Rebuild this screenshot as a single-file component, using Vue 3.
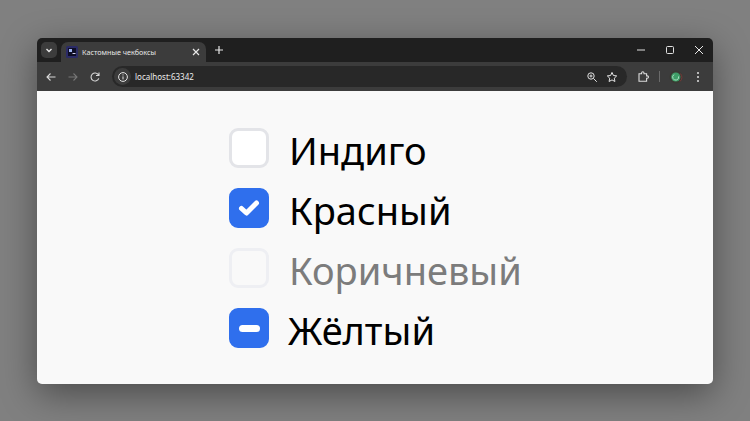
<script setup>
const items = [
  { label: 'Индиго', state: 'empty' },
  { label: 'Красный', state: 'checked' },
  { label: 'Коричневый', state: 'disabled' },
  { label: 'Жёлтый', state: 'mixed' },
]
</script>

<template>
  <div class="stage">
    <div class="window">
      <div class="tabbar">
        <div class="tabmenu">
          <svg width="10" height="10" viewBox="0 0 10 10"><path d="M2.5 4l2.5 2.5L7.5 4" fill="none" stroke="#e8e8e8" stroke-width="1.4"/></svg>
        </div>
        <div class="tab">
          <svg class="favicon" width="12" height="12" viewBox="0 0 12 12">
            <rect width="12" height="12" rx="1.5" fill="#2b2b66"/>
            <rect x="2" y="2" width="8" height="8" fill="#0e0e26"/>
            <rect x="3" y="3" width="3" height="3" fill="#9fb4f0"/>
            <rect x="6.5" y="7" width="3" height="1" fill="#d0d0f0"/>
          </svg>
          <span class="tabtitle">Кастомные чекбоксы</span>
          <svg width="10" height="10" viewBox="0 0 10 10"><path d="M2 2l6 6M8 2l-6 6" stroke="#e8e8e8" stroke-width="1.2"/></svg>
        </div>
        <svg class="newtab" width="10" height="10" viewBox="0 0 10 10"><path d="M5 1v8M1 5h8" stroke="#e8e8e8" stroke-width="1.2"/></svg>
        <div class="spacer"></div>
        <div class="winctl">
          <svg width="10" height="10" viewBox="0 0 10 10"><path d="M1 5h8" stroke="#e0e0e0" stroke-width="1"/></svg>
          <svg width="10" height="10" viewBox="0 0 10 10"><rect x="1.5" y="1.5" width="7" height="7" rx="1" fill="none" stroke="#e0e0e0" stroke-width="1"/></svg>
          <svg width="10" height="10" viewBox="0 0 10 10"><path d="M1 1l8 8M9 1l-8 8" stroke="#e8e8e8" stroke-width="1"/></svg>
        </div>
      </div>
      <div class="toolbar">
        <svg class="tool" width="12" height="12" viewBox="0 0 12 12"><path d="M10.5 6H2M5.5 2.5L2 6l3.5 3.5" fill="none" stroke="#d8d8d8" stroke-width="1.1"/></svg>
        <svg class="tool" width="12" height="12" viewBox="0 0 12 12"><path d="M1.5 6H10M6.5 2.5L10 6l-3.5 3.5" fill="none" stroke="#767676" stroke-width="1.1"/></svg>
        <svg class="tool reload" width="12" height="12" viewBox="0 0 12 12"><path d="M9.8 7.4A4 4 0 1 1 9.5 4M10 1.5V4.5H7" fill="none" stroke="#d8d8d8" stroke-width="1.1"/></svg>
        <div class="omnibox">
          <span class="infobtn">
            <svg width="12" height="12" viewBox="0 0 12 12"><circle cx="6" cy="6" r="4.4" fill="none" stroke="#e4e4e4" stroke-width="1"/><path d="M6 5.4v3M6 3.4v1" stroke="#e4e4e4" stroke-width="1"/></svg>
          </span>
          <span class="url">localhost:63342</span>
          <div class="spacer"></div>
          <svg width="12" height="12" viewBox="0 0 12 12"><circle cx="5" cy="5" r="3.2" fill="none" stroke="#e0e0e0" stroke-width="1"/><path d="M7.4 7.4L10.8 10.8M3.5 5h3M5 3.5v3" stroke="#e0e0e0" stroke-width="1"/></svg>
          <svg class="star" width="12" height="12" viewBox="0 0 12 12"><path d="M6 1.4l1.4 3.1 3.3.4-2.4 2.3.6 3.3L6 8.9l-2.9 1.6.6-3.3L1.3 4.9l3.3-.4z" fill="none" stroke="#e4e4e4" stroke-width="1"/></svg>
        </div>
        <svg class="ext" width="13" height="13" viewBox="0 0 13 13"><path d="M2 3.8h2.6V2.9a1.2 1.2 0 0 1 2.4 0v.9h2.6v2.1h.7a1.2 1.2 0 0 1 0 2.4h-.7v3H2z" fill="none" stroke="#dcdcdc" stroke-width="1.1"/></svg>
        <span class="sep"></span>
        <svg class="avatar" width="14" height="14" viewBox="0 0 14 14">
          <circle cx="7" cy="7" r="6.5" fill="#3a3a34"/>
          <path d="M11.5 3.6A6 6 0 0 1 11 11.5" fill="none" stroke="#7a3a3a" stroke-width="1"/>
          <circle cx="6.8" cy="7" r="4.6" fill="#3f9e68"/>
          <path d="M5 4.6A3 3 0 1 0 9.6 6.4" fill="none" stroke="#a8e0c0" stroke-width="1"/>
        </svg>
        <svg class="more" width="10" height="12" viewBox="0 0 10 12"><circle cx="5" cy="2" r="1" fill="#e0e0e0"/><circle cx="5" cy="6" r="1" fill="#e0e0e0"/><circle cx="5" cy="10" r="1" fill="#e0e0e0"/></svg>
      </div>
      <main class="page">
        <div class="list">
          <label v-for="item in items" :key="item.label" class="row" :class="item.state">
            <span class="box">
              <svg v-if="item.state === 'checked'" width="24" height="20" viewBox="0 0 24 20"><path d="M4.5 10.5l5 4.5L19.5 5" fill="none" stroke="#fff" stroke-width="5" stroke-linecap="round" stroke-linejoin="round"/></svg>
              <span v-if="item.state === 'mixed'" class="dash"></span>
            </span>
            <span class="text">{{ item.label }}</span>
          </label>
        </div>
      </main>
    </div>
  </div>
</template>

<style>
html, body { margin: 0; background: #808080; }
</style>

<style scoped>
.stage {
  width: 750px;
  height: 421px;
  box-sizing: border-box;
  padding: 38px 37px;
  background: #808080;
  overflow: hidden;
  font-family: "Noto Sans", "Open Sans", sans-serif;
}
.window {
  width: 676px;
  height: 346px;
  border-radius: 5px;
  overflow: hidden;
  display: flex;
  flex-direction: column;
  box-shadow: 0 10px 36px rgba(0, 0, 0, 0.42);
}
.tabbar {
  height: 24px;
  background: #1f1f1f;
  display: flex;
  align-items: center;
  flex: none;
}
.tabmenu {
  width: 16px;
  height: 16px;
  margin-left: 4px;
  border-radius: 5px;
  background: #3c3c3c;
  display: flex;
  align-items: center;
  justify-content: center;
}
.tab {
  width: 145px;
  height: 20px;
  margin: 4px 0 0 4px;
  padding: 0 5px;
  box-sizing: border-box;
  background: #3c3c3c;
  border-radius: 7px 7px 0 0;
  display: flex;
  align-items: center;
}
.favicon { flex: none; }
.tabtitle {
  flex: 1;
  margin-left: 4px;
  font-size: 7.2px;
  color: #e6e6e6;
  white-space: nowrap;
}
.newtab { margin-left: 8px; }
.spacer { flex: 1; }
.winctl {
  display: flex;
  gap: 19px;
  margin-right: 9px;
  align-items: center;
}
.toolbar {
  height: 29px;
  background: #3c3c3c;
  display: flex;
  align-items: center;
  flex: none;
  padding-left: 8px;
}
.tool { margin-right: 10px; flex: none; }
.reload { margin-right: 11px; }
.omnibox {
  width: 515px;
  height: 21px;
  border-radius: 11px;
  background: #282828;
  display: flex;
  align-items: center;
  box-sizing: border-box;
  padding: 0 9px 0 2px;
}
.infobtn {
  width: 17px;
  height: 17px;
  border-radius: 50%;
  background: #3c3c3c;
  display: flex;
  align-items: center;
  justify-content: center;
}
.url {
  margin-left: 4px;
  font-size: 8px;
  color: #ececec;
}
.star { margin-left: 8px; }
.ext { margin-left: 10px; flex: none; }
.sep {
  width: 1px;
  height: 11px;
  background: #6a6a6a;
  margin-left: 9px;
}
.avatar { margin-left: 9px; flex: none; }
.more { margin-left: 10px; flex: none; }
.page {
  flex: 1;
  background: #f9f9f9;
  display: flex;
  justify-content: center;
  padding-top: 37px;
}
.list {
  display: flex;
  flex-direction: column;
  gap: 20px;
  width: 292px;
}
.row {
  display: flex;
  align-items: center;
  gap: 20px;
  height: 40px;
  color: #000;
}
.box {
  width: 40px;
  height: 40px;
  box-sizing: border-box;
  border-radius: 9px;
  border: 3px solid #e3e4e8;
  background: #fff;
  display: flex;
  align-items: center;
  justify-content: center;
  flex: none;
}
.text {
  font-size: 38px;
  line-height: 40px;
  padding-top: 3px;
  white-space: nowrap;
}
.checked .box, .mixed .box {
  background: #2f6fed;
  border-color: #2f6fed;
}
.disabled .box {
  background: #f9f9f9;
  border-color: #eeeff3;
}
.disabled .text { color: #7c7c7c; }
.dash {
  width: 21px;
  height: 7px;
  border-radius: 3.5px;
  background: #fff;
}
.mixed { gap: 19px; }
</style>
